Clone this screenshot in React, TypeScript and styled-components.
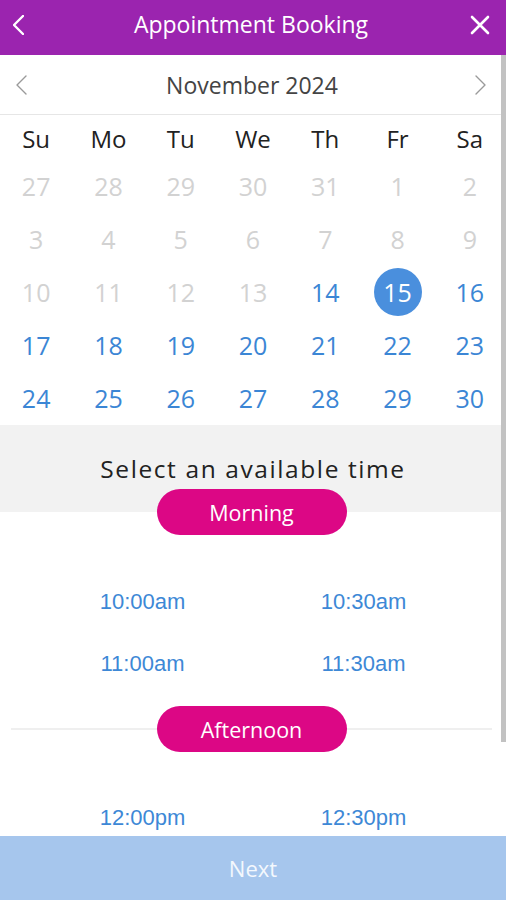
import React from "react";
import styled, { createGlobalStyle } from "styled-components";

const Global = createGlobalStyle`
  html, body { margin: 0; padding: 0; background: #fff; }
  body { font-family: "Open Sans", "Noto Sans", sans-serif; }
  * { box-sizing: border-box; }
`;

const Screen = styled.div`
  width: 506px;
  height: 900px;
  display: flex;
  flex-direction: column;
  overflow: hidden;
  background: #fff;
`;

const Header = styled.header`
  height: 55px;
  flex: 0 0 55px;
  background: #9b24af;
  display: flex;
  align-items: center;
  justify-content: space-between;
  padding: 0 14px 0 6px;
  color: #fff;
`;

const Title = styled.h1`
  margin: 0;
  font-size: 23px;
  font-weight: 400;
  letter-spacing: 0;
  padding-left: 4px;
  padding-bottom: 8px;
`;

const IconButton = styled.button`
  background: none;
  border: 0;
  padding: 0;
  width: 24px;
  height: 30px;
  display: flex;
  align-items: center;
  justify-content: center;
  color: inherit;
  margin-top: -6px;
`;

const Body = styled.main`
  flex: 1;
  position: relative;
  overflow: hidden;
`;

const ScrollThumb = styled.div`
  position: absolute;
  right: 0;
  top: 0;
  width: 5px;
  height: 687px;
  background: #c2c2c2;
`;

const MonthBar = styled.div`
  height: 60px;
  display: flex;
  align-items: center;
  justify-content: space-between;
  padding: 0 20px 0 16px;
  border-bottom: 1px solid #e6e6e6;
`;

const MonthLabel = styled.div`
  font-size: 23px;
  color: #444;
  margin-top: 0;
  margin-left: 2px;
`;

const WeekHeader = styled.div`
  display: grid;
  grid-template-columns: repeat(7, 1fr);
  height: 45px;
  align-items: center;
`;

const WeekDay = styled.div`
  text-align: center;
  font-size: 24px;
  color: #222;
  margin-top: 2px;
`;

const DayGrid = styled.div`
  display: grid;
  grid-template-columns: repeat(7, 1fr);
  grid-auto-rows: 53px;
`;

const DayCell = styled.div`
  display: flex;
  align-items: center;
  justify-content: center;
`;

const DayNum = styled.span<{ $state: "past" | "open" | "selected" }>`
  width: 48px;
  height: 48px;
  border-radius: 50%;
  display: flex;
  align-items: center;
  justify-content: center;
  font-size: 25px;
  margin-top: -1px;
  color: ${(p) =>
    p.$state === "past" ? "#d2d2d2" : p.$state === "selected" ? "#fff" : "#3b86d5"};
  background: ${(p) => (p.$state === "selected" ? "#4a8fdd" : "transparent")};
`;

const SelectBand = styled.div`
  background: #f2f2f2;
  height: 87px;
  display: flex;
  align-items: center;
  justify-content: center;
  position: relative;
`;

const SelectText = styled.div`
  font-size: 24.5px;
  color: #222;
  letter-spacing: 1.6px;
  margin-top: 0;
`;

const PeriodRow = styled.div<{ $line?: boolean }>`
  position: relative;
  display: flex;
  justify-content: center;
  margin: 0 14px 0 11px;
  &::before {
    content: "";
    display: ${(p) => (p.$line ? "block" : "none")};
    position: absolute;
    left: 0;
    right: 0;
    top: 50%;
    height: 2px;
    margin-top: -1px;
    background: #efefef;
  }
`;

const Pill = styled.div`
  position: relative;
  width: 190px;
  height: 46px;
  border-radius: 23px;
  background: #dc0785;
  color: #fff;
  font-size: 21.5px;
  display: flex;
  align-items: center;
  justify-content: center;
`;

const MorningWrap = styled.div`
  margin-top: -23px;
  position: relative;
`;

const TimeGrid = styled.div<{ $top: number }>`
  display: grid;
  grid-template-columns: 1fr 1fr;
  grid-auto-rows: 62px;
  padding: ${(p) => p.$top}px 32px 0 32px;
`;

const TimeSlot = styled.div`
  display: flex;
  align-items: center;
  justify-content: center;
  font-family: "Liberation Sans", Arial, sans-serif;
  font-size: 22px;
  color: #3d88d6;
`;

const Footer = styled.button`
  flex: 0 0 64px;
  height: 64px;
  border: 0;
  background: #a6c6ed;
  color: #f4f8fd;
  font-family: "Open Sans", sans-serif;
  font-size: 22px;
  padding-bottom: 2px;
`;

const Chevron = ({ dir, color, w, h, sw }: { dir: "l" | "r"; color: string; w: number; h: number; sw: number }) => (
  <svg width={w} height={h} viewBox={`0 0 ${w} ${h}`} fill="none">
    <polyline
      points={dir === "l" ? `${w - 1},1 1,${h / 2} ${w - 1},${h - 1}` : `1,1 ${w - 1},${h / 2} 1,${h - 1}`}
      stroke={color}
      strokeWidth={sw}
      strokeLinecap="round"
      strokeLinejoin="round"
    />
  </svg>
);

const weekDays = ["Su", "Mo", "Tu", "We", "Th", "Fr", "Sa"];
const days: { n: number; s: "past" | "open" | "selected" }[] = [
  ...[27, 28, 29, 30, 31].map((n) => ({ n, s: "past" as const })),
  ...Array.from({ length: 13 }, (_, i) => ({ n: i + 1, s: "past" as const })),
  ...Array.from({ length: 17 }, (_, i) => ({
    n: i + 14,
    s: (i + 14 === 15 ? "selected" : "open") as "selected" | "open",
  })),
];

export default function App() {
  return (
    <>
      <Global />
      <Screen>
        <Header>
          <IconButton aria-label="Back">
            <Chevron dir="l" color="#fff" w={11} h={20} sw={2.4} />
          </IconButton>
          <Title>Appointment Booking</Title>
          <IconButton aria-label="Close">
            <svg width="20" height="20" viewBox="0 0 20 20">
              <path d="M2 2 L18 18 M18 2 L2 18" stroke="#fff" strokeWidth="2.6" strokeLinecap="round" />
            </svg>
          </IconButton>
        </Header>
        <Body>
          <MonthBar>
            <Chevron dir="l" color="#9a9a9a" w={11} h={20} sw={1.4} />
            <MonthLabel>November 2024</MonthLabel>
            <Chevron dir="r" color="#9a9a9a" w={11} h={20} sw={1.4} />
          </MonthBar>
          <WeekHeader>
            {weekDays.map((d) => (
              <WeekDay key={d}>{d}</WeekDay>
            ))}
          </WeekHeader>
          <DayGrid>
            {days.map((d, i) => (
              <DayCell key={i}>
                <DayNum $state={d.s}>{d.n}</DayNum>
              </DayCell>
            ))}
          </DayGrid>
          <SelectBand>
            <SelectText>Select an available time</SelectText>
          </SelectBand>
          <MorningWrap>
            <PeriodRow>
              <Pill>Morning</Pill>
            </PeriodRow>
          </MorningWrap>
          <TimeGrid $top={36}>
            <TimeSlot>10:00am</TimeSlot>
            <TimeSlot>10:30am</TimeSlot>
            <TimeSlot>11:00am</TimeSlot>
            <TimeSlot>11:30am</TimeSlot>
          </TimeGrid>
          <PeriodRow $line style={{ marginTop: 11 }}>
            <Pill>Afternoon</Pill>
          </PeriodRow>
          <TimeGrid $top={35}>
            <TimeSlot>12:00pm</TimeSlot>
            <TimeSlot>12:30pm</TimeSlot>
          </TimeGrid>
          <ScrollThumb />
        </Body>
        <Footer>Next</Footer>
      </Screen>
    </>
  );
}
